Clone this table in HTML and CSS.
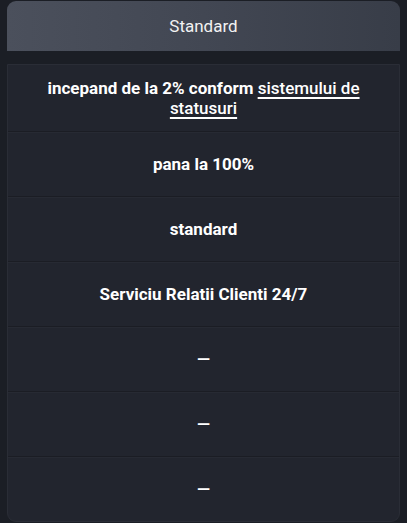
FILE: index.html
```html
<!DOCTYPE html>
<html lang="ro">
<head>
<meta charset="utf-8">
<link rel="stylesheet" href="styles.css">
</head>
<body>
<div class="plan">
  <div class="plan-head">Standard</div>
  <div class="plan-body">
    <div class="row"><span class="cell">incepand de la 2% conform <a href="#" class="link">sistemului de statusuri</a></span></div>
    <div class="row"><span class="cell">pana la 100%</span></div>
    <div class="row"><span class="cell">standard</span></div>
    <div class="row"><span class="cell">Serviciu Relatii Clienti 24/7</span></div>
    <div class="row"><span class="cell">—</span></div>
    <div class="row"><span class="cell">—</span></div>
    <div class="row"><span class="cell">—</span></div>
  </div>
</div>
</body>
</html>
```
FILE: styles.css
```css
html, body {
  margin: 0;
  padding: 0;
  background: #1b1e25;
  font-family: Roboto, "Liberation Sans", sans-serif;
  color: #fff;
}
.plan {
  padding: 1px 7px 0 7px;
  display: flex;
  flex-direction: column;
  gap: 13px;
}
.plan-head {
  height: 50px;
  border-radius: 9px 9px 0 0;
  background: linear-gradient(90deg, #4b505c 0%, #424753 50%, #383d48 100%);
  display: flex;
  align-items: center;
  justify-content: center;
  font-size: 17px;
  color: #f2f2f2;
}
.plan-body {
  background: #22252e;
  border: 1px solid #2a2d36;
  border-radius: 0 0 9px 9px;
  display: flex;
  flex-direction: column;
}
.row {
  height: 64px;
  border-bottom: 1px solid #1b1d24;
  box-shadow: 0 1px 0 #272a33;
  display: flex;
  align-items: center;
  justify-content: center;
  text-align: center;
  padding: 0 30px;
  font-size: 17px;
  font-weight: 700;
  line-height: 20px;
}
.row:first-child {
  height: 66px;
}
.row:last-child {
  border-bottom: none;
  box-shadow: none;
}
.cell {
  display: block;
}
.link {
  color: #fff;
  font-weight: 500;
  text-decoration: underline;
  text-decoration-thickness: 1.5px;
  text-underline-offset: 3px;
}
```
